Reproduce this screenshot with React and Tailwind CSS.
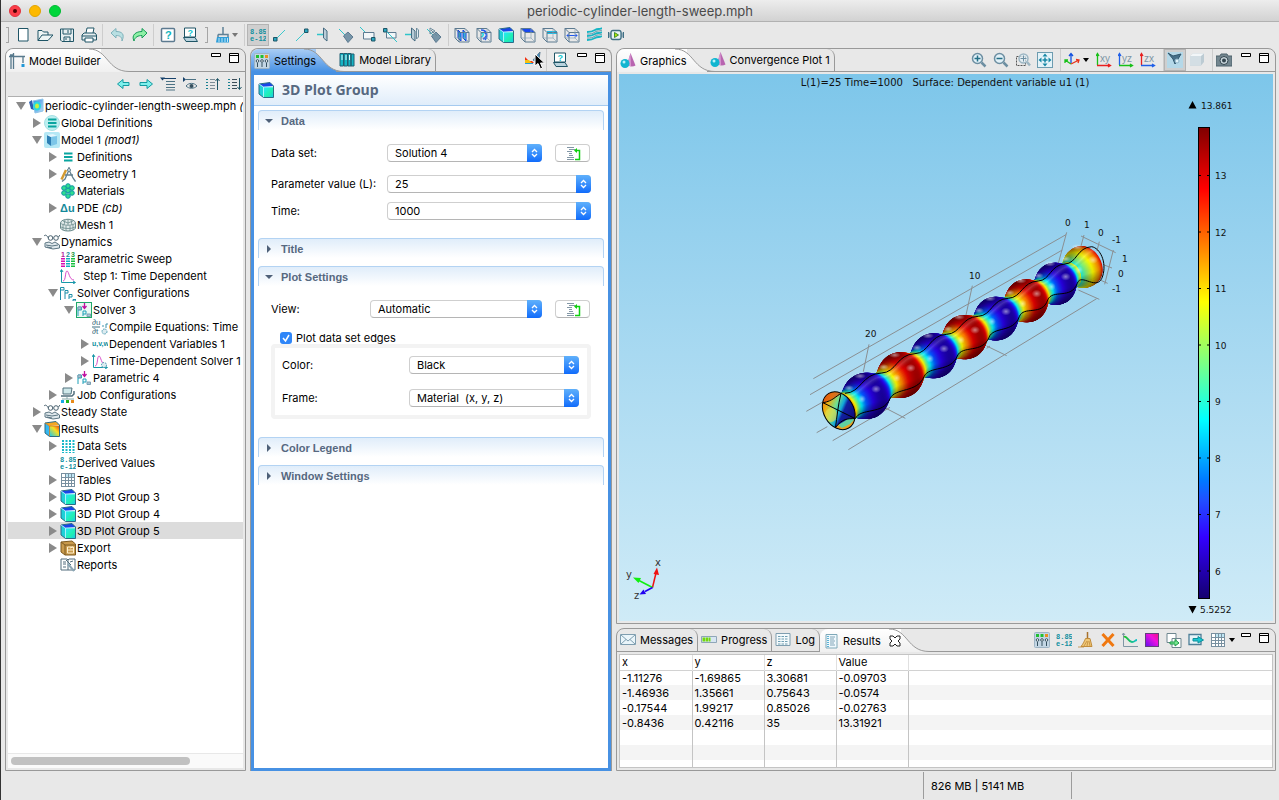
import { useState } from 'react';

const DARK = '#1f5566';
const STEEL = '#5f8196';

const Svg = ({ w = 16, h = 16, children }) => (
  <svg width={w} height={h} viewBox={`0 0 ${w} ${h}`} fill="none" className="shrink-0" aria-hidden="true">
    {children}
  </svg>
);

const NumIcon = () => (
  <Svg>
    <g fill="#0f8fa0" fontFamily="Liberation Mono, monospace" fontWeight="bold" fontSize="7">
      <text x="0" y="7">8.85</text>
      <text x="0" y="14">e-12</text>
    </g>
  </Svg>
);

const Cube = ({ hot }) => (
  <Svg>
    <path d="M1 2L5.500 5V15.500L1 12Z" fill={hot ? '#35b8f0' : '#1fd0d8'} />
    <path d="M1 2L12 .5L15.500 4L5.500 5Z" fill={hot ? '#f5a623' : '#1845e8'} />
    <path d="M5.500 5H15.500V15.500H5.500Z" fill={hot ? 'url(#hotFace)' : 'url(#coolFace)'} />
    <path d="M1 2L12 .5L15.500 4V15.500H5.500L1 12Z" stroke="#2b6c86" strokeWidth="1" />
    <path d="M1 2L5.500 5V15M5.500 5H15" stroke={hot ? '#c87820' : '#bff6ff'} strokeWidth=".8" />
  </Svg>
);

const WireCube = ({ children }) => (
  <Svg>
    {children}
    <path d="M1 1.5H11L15 5.5V15H5L1 11ZM1 1.5L5 5.5H15M5 5.5V15" stroke="#5c7a90" />
    <path d="M11 1.5V11H1M11 11L15 15" stroke="#8aa4b4" strokeWidth=".7" />
  </Svg>
);

const FileIcon = () => <Svg><path d="M3.5 1.5H13V14H3.5Z" fill="#fff" stroke={DARK} /></Svg>;
const OpenIcon = () => <Svg><path d="M1 13.500V3.500H5L6.500 5H11V8M1 13.500L5 8H16L11 13.500Z" stroke={DARK} fill="#eef5f5" /></Svg>;
const SaveIcon = () => (
  <Svg><path d="M1.500 2H14.500V14.500H3L1.500 13Z" stroke={DARK} fill="#e6eef0" /><path d="M4 2V7H12V2M5 14V10H11V14M9 3V6M7 11V13" stroke={DARK} /></Svg>
);
const PrintIcon = () => (
  <Svg><path d="M5 6L6 1H13L12 6" stroke={DARK} fill="#fff" /><path d="M1 8L3 6H14L15.500 8V13H1Z" stroke={DARK} fill="#e6eef0" /><path d="M1 9H15M4 11H12V15H4Z" stroke={DARK} fill="#fff" /></Svg>
);
const UndoIcon = () => <Svg><path d="M1 6L6 1.500V4.500C12 4.500 15 7 12 14C12 10 10 8.500 6 8.500V11Z" fill="#b8dfe2" stroke="#7fb2bb" /></Svg>;
const RedoIcon = () => <Svg><path d="M15 6L10 1.500V4.500C4 4.500 -1 8 2 14C3 10 6 8.500 10 8.500V11Z" fill="#8ff0a6" stroke="#149a55" /></Svg>;
const HelpIcon = () => (
  <Svg><rect x="1.500" y="1.500" width="13" height="13" rx="1" fill="#fff" stroke="#5c7a90" strokeWidth="1.500" /><text x="5" y="12" fontSize="11" fontWeight="bold" fill="#0fb5bd" fontFamily="Liberation Sans">?</text></Svg>
);
const BookIcon = () => (
  <Svg><path d="M2.500 1H13.500V10H2.500Z" fill="#fff" stroke={DARK} /><path d="M1.500 10.500H13L15.500 14.500H4Z" fill="#b9d3de" stroke={DARK} /><text x="5.500" y="9" fontSize="9" fontWeight="bold" fill="#0fc5cd" fontFamily="Liberation Sans">?</text></Svg>
);
const BrushIcon = () => (
  <Svg><path d="M8 0V7M3 7.500H13V10M3 7.500V10" stroke={STEEL} strokeWidth="1.500" /><path d="M2 10H14V15.500H1Z" fill="#2f9ed8" /><path d="M4 11V15M7 11V15M10 11V15M12.500 11V15" stroke="#bfe6fa" /></Svg>
);
const LineLow = () => <Svg><path d="M3 13L13 3" stroke="#3cc8cc" /><path d="M1.500 10.500H5V14H1.500Z" fill="#2aa7c0" stroke={DARK} /></Svg>;
const LineHigh = () => <Svg><path d="M2 14L12 4" stroke="#3cc8cc" /><path d="M10.500 2H14V5.500H10.500Z" fill="#2aa7c0" stroke={DARK} /></Svg>;
const PlaneV = ({ twice }) => (
  <Svg><path d="M1 7.500H8" stroke="#2fc4ca" strokeWidth="1.500" /><path d="M7.500 1L11 4V14L7.500 11Z" fill="#b9cdd8" stroke="#456a80" />{twice && <path d="M12.500 1V12L14.500 10V3Z" fill="#dfeaf0" stroke="#6c8b9c" />}</Svg>
);
const PlaneD = ({ twice }) => (
  <Svg><path d="M1 2L8 9" stroke="#2fc4ca" /><path d="M5.500 9L10 5L15 10L10 15.500Z" fill="#7795a8" stroke="#5c7a90" />{twice && <path d="M4 1V7L9 4ZM5 3L11 9" stroke="#6c8b9c" />}</Svg>
);
const BoxA = () => <Svg><path d="M0 0L6 6" stroke="#2fc4ca" /><path d="M3.500 5.500H14V12H3.500Z" fill="#f2f6f8" stroke="#5c7a90" /><path d="M11.500 10.500H15V14H11.500Z" fill="#2aa7c0" stroke={DARK} /></Svg>;
const BoxB = () => <Svg><path d="M4.500 5.500H14V11H4.500Z" fill="#f2f6f8" stroke="#5c7a90" /><path d="M3 3L15 15" stroke="#2fc4ca" /><path d="M1.500 1.500H5V5H1.500Z" fill="#2aa7c0" stroke={DARK} /></Svg>;
const Waves = () => (
  <Svg><path d="M1 5C5 5 6 5 9 3S13 3 16 1M1 9C5 9 6 9 9 7S13 7 16 5M1 13C5 13 6 13 9 11S13 11 16 9" stroke="#16b5c4" strokeWidth="1.800" /><path d="M1 7C5 7 6 7 9 5S13 5 16 3M1 11C5 11 6 11 9 9S13 9 16 7" stroke="#3d8299" strokeWidth=".8" /></Svg>
);
const PlayBox = () => (
  <Svg><rect x="3" y="3.500" width="10" height="9" rx="2" fill="#e9f2f4" stroke="#3f6f85" strokeWidth="1.300" /><path d="M.5 5V11M2 5.500V10.500M14 5.500V10.500M15.500 5V11" stroke="#3f6f85" /><path d="M6.500 5.500L10.500 8L6.500 10.500Z" fill="#b4e600" stroke="#3f8f30" /></Svg>
);

// tree and view icons
const Lines = ({ round }) => (
  <Svg>
    {round && <circle cx="8" cy="8" r="7.500" fill="#bdeff0" stroke="#a5dfe4" />}
    <path d="M4 4.500H12.500M4 8H12.500M4 11.500H12.500" stroke="#0aa5a0" strokeWidth="1.800" />
  </Svg>
);
const RootIcon = () => (
  <Svg><path d="M1 4L4 2L6 12L3 11Z" fill="#2c5fb0" /><path d="M5 3L15 1V13L7 15Z" fill="url(#sky)" stroke="#8dc3e8" /><ellipse cx="9" cy="8" rx="4" ry="4.500" fill="#29d8e0" /><ellipse cx="9" cy="8" rx="2" ry="2.500" fill="#c8f040" /></Svg>
);
const ModelIcon = () => (
  <Svg><rect width="16" height="16" rx="2" fill="#b5e8f5" /><path d="M3 3L7 5V14L3 11Z" fill="#2d7fb5" /><path d="M3 3L9 2L13 4L7 5Z" fill="#e5f6fd" /><path d="M7 5L13 4V12L7 14Z" fill="#7cc6e8" /></Svg>
);
const GeometryIcon = () => (
  <Svg><path d="M6 4L1.500 13.500" stroke="#d39a30" strokeWidth="2.500" /><path d="M9 1V4M9 4L5 13L2 15.500M9 4L13 12L15.500 15.500M5 9H13" stroke="#64808f" strokeWidth="1.300" /><circle cx="9" cy="4" r="1.500" fill="#dce6ea" stroke="#64808f" /></Svg>
);
const MaterialsIcon = () => (
  <Svg>
    {[[8, 3], [4, 5], [12, 5], [8, 7.5], [4, 10], [12, 10], [8, 13]].map(([x, y]) => (
      <circle key={`${x}-${y}`} cx={x} cy={y} r="2.300" fill="#2fdf90" stroke="#0f95a5" />
    ))}
  </Svg>
);
const PdeIcon = () => <Svg><text x="0" y="12" fontSize="11" fontWeight="bold" fill="#14899a" fontFamily="Liberation Sans">Δu</text></Svg>;
const MeshIcon = () => (
  <Svg><path d="M.5 6C1 1 15 1 15.500 6V11C14 15 2 15 .5 11Z" fill="#e2ebeb" stroke="#6a8a8c" /><path d="M.5 6C3 9 13 9 15.500 6M3 7.500V13M6 8.500V14M10 8.500V14M13 7.500V13M1 10C4 12 12 12 15 10M3 4L8 6L13 4M8 2V8M5 3L4 8M11 3L12 8" stroke="#6a8a8c" strokeWidth=".8" /></Svg>
);
const StudyIcon = () => (
  <Svg><circle cx="6.500" cy="4" r="2.300" stroke="#48606e" /><circle cx="12" cy="4" r="2.300" stroke="#48606e" /><path d="M0 2C2 0 3 2 4.500 4M14.500 3L16 1" stroke="#48606e" /><path d="M1 9L5 8L8 9.500L11 8L15.500 11V14L9 15L1 13Z" fill="#dfe8ec" stroke="#5c7683" /><path d="M2 11L8 12L14 11M3 13L8 14" stroke="#5c7683" /></Svg>
);
const SweepIcon = () => (
  <Svg>
    <g fontSize="7" fontWeight="bold" fontFamily="Liberation Sans"><text x="1" y="6" fill="#b5189a">1</text><text x="6" y="6" fill="#178e9c">2</text><text x="11" y="6" fill="#189a40">3</text></g>
    <path d="M3 7V16" stroke="#d810b0" strokeWidth="4" strokeDasharray="1.500 1" /><path d="M8 7V16" stroke="#12b0c0" strokeWidth="4" strokeDasharray="1.500 1" /><path d="M13 7V16" stroke="#18c040" strokeWidth="4" strokeDasharray="1.500 1" />
  </Svg>
);
const StepIcon = ({ gear }) => (
  <Svg><path d="M1.500 2V14.500H15M0 4L1.500 1.500L3 4M13 13L15.500 14.500L13 16" stroke="#1897a8" /><path d="M3 13C6 13 5 3 7 3S9 12 14 12" stroke="#d84fc8" />{gear && <circle cx="12" cy="12" r="2.500" fill="#dcebf0" stroke="#3c93ac" strokeDasharray="1.500 1" />}</Svg>
);
const ConfIcon = () => (
  <Svg><path d="M.5 15V2.500H4V5H.5M5 14V5.500H8V8H5M9 14V9.500H12V12H9M13 14.500H16V16H13Z" stroke="#1d8fa8" /></Svg>
);
const SolverIcon = ({ boxed }) => (
  <Svg>{boxed && <rect x=".5" y=".5" width="15" height="15" fill="#eaf8f4" stroke="#20a86a" />}<path d="M8.500 1V6M6.500 4L8.500 6.500L10.500 4" stroke="#c010a0" strokeWidth="1.300" /><path d="M2 14V5H5.500V8H2M7 14V9H10V12H7" stroke="#1d9fb8" /><path d="M2 5H5V7.500H2ZM11 12H14.500V14.500H11Z" fill="#a9c6d6" stroke="#7c9fb2" /></Svg>
);
const CompileIcon = () => (
  <Svg><g fontSize="8" fill="#3c6f80" fontFamily="Liberation Sans"><text x="0" y="6">∂u</text><text x="0" y="15">∂t</text></g><path d="M0 8H8" stroke="#3c6f80" /><path d="M10 7H12M14 5H16M14 5V9" stroke="#3c93ac" /><circle cx="12.500" cy="12.500" r="2.500" fill="#dcebf0" stroke="#3c93ac" strokeDasharray="1.500 1" /></Svg>
);
const UvwIcon = () => <Svg><text x="0" y="10" fontSize="7" fontWeight="bold" fill="#0f8fa0" fontFamily="Liberation Sans">u,v,w</text></Svg>;
const JobIcon = () => (
  <Svg><path d="M3 1H12L11 7H3Z" fill="#cfe8ea" stroke="#51707d" /><path d="M1 9H12L14 7V4" stroke="#51707d" strokeWidth="1.500" /><path d="M7 10V12M2 12H14" stroke="#8aa" /><path d="M1 13H4V16H1Z" fill="#18a8e8" /><path d="M6 13H9V16H6Z" fill="#20b820" /><path d="M11 13H14V16H11Z" fill="#e88a18" /></Svg>
);
const DataSetsIcon = () => (
  <Svg><path d="M3 2V15M6.500 2V15M10 2V15M13.500 2V15" stroke="#18b8c8" strokeWidth="2" strokeDasharray="2 1" /></Svg>
);
const GridIcon = () => (
  <Svg><rect x="1.500" y="1.500" width="13" height="13" fill="#fff" stroke="#7890a0" /><path d="M5 2H14V5H5Z" fill="#bfe6f4" /><path d="M2 5.500H14M2 8.500H14M2 11.500H14M5.500 2V14M8.500 2V14M11.500 2V14" stroke="#7890a0" /></Svg>
);
const ExportIcon = () => (
  <Svg><path d="M1 2L12 1L15.500 4V15H5L1 12Z" fill="#c99a4c" stroke="#7d5a20" /><path d="M5 5H15M5 5V15M1 2L5 5" stroke="#7d5a20" /><path d="M7.500 7H13.500V13H7.500ZM8 10H13M10 8L13 7" stroke="#fff0cc" /></Svg>
);
const ReportIcon = () => (
  <Svg><path d="M1 2H7L8 3L9 2H15V13H1Z" fill="#fff" stroke="#526d7c" /><path d="M8 3V13M3 5H6M3 7H6M3 10H6M10 5L13 4M11 8L6 3" stroke="#526d7c" /><path d="M8 7L14 14" stroke="#8aa6b5" strokeWidth="2" /></Svg>
);

const ConeIcon = () => (
  <Svg><path d="M10.500 0L15.500 12.500C13 14 9 13.500 7 12Z" fill="#b865b0" /><path d="M10.500 0L11 13.500L7 12Z" fill="#d89ad2" /><circle cx="5" cy="10.500" r="4.500" fill="#12b5d0" /><circle cx="4" cy="9" r="1.500" fill="#b8f2fa" /></Svg>
);
const CraneIcon = () => <Svg><path d="M0 3.500H16M4.500 0V16M2 16V4M14 4V10M1 2H5" stroke="#57798c" strokeWidth="1.300" /><path d="M12.500 11H15.500V14H12.500Z" fill="#2098d8" /></Svg>;
const SettingsIcon = () => (
  <Svg><rect x=".5" y=".5" width="15" height="15" rx="1" fill="#c3d6e4" stroke="#9eb4c4" /><path d="M2 2H5V5H2ZM6.500 2H9.500V5H6.500Z" fill="#20c030" /><path d="M11 2H14V5H11Z" fill="#e89020" /><g stroke="#35505f" fill="#fff"><circle cx="3.500" cy="8" r="1.300" /><circle cx="8" cy="8" r="1.300" /><circle cx="12.500" cy="8" r="1.300" /><path d="M3.500 10V14M8 10V14M12.500 10V14" /></g></Svg>
);
const LibraryIcon = () => (
  <Svg><path d="M1 1.500H4.500V14H1ZM5 1.500H8.500V14H5ZM9 1.500H12V14H9ZM12 2H15V14H12Z" fill="#15b5c5" stroke="#205f72" /><path d="M3 3V8M7 3V8M10.500 3V8" stroke="#d8fbfc" /></Svg>
);
const MailIcon = () => <Svg><path d="M.5 2.500H15.500V12.500H.5Z" fill="#eaf5fa" stroke="#7f9eb0" /><path d="M1 3L8 9L15 3M1 12L6 7.500M15 12L10 7.500" stroke="#7f9eb0" /></Svg>;
const ProgressIcon = () => <Svg><path d="M.5 4.500H15.500V10.500H.5Z" fill="#d7e6f2" stroke="#8fa6b8" /><path d="M1.500 7.500H9.500" stroke="#74d80c" strokeWidth="4" strokeDasharray="2.500 .5" /></Svg>;
const LogIcon = () => <Svg><path d="M1 1.500H15V13.500H1Z" fill="#f4fafc" stroke="#7f9eb0" /><path d="M3 4.500H13M3 7H13M3 9.500H13M3 12H13" stroke="#4d86a0" strokeDasharray="2.500 1" strokeWidth=".8" /></Svg>;
const ResultsIcon = () => <Svg><path d="M3 1.500H14V15H3Z" fill="#f0f9fd" stroke="#7fa8b8" /><path d="M5 3V14" stroke="#2a9ac8" strokeDasharray="1 1" strokeWidth="1.500" /><path d="M7 4H12M7 6H11M7 8H12M7 10H11M7 12H12" stroke="#6690a4" strokeWidth=".8" /></Svg>;

const Lens = ({ plus }) => (
  <Svg>
    <circle cx="6.500" cy="6.500" r="5" fill="#e2f1f8" stroke="#6d8fa2" strokeWidth="1.500" />
    <path d="M10.500 10.500L14.500 14.500" stroke="#6d8fa2" strokeWidth="2.500" />
    <path d={plus ? 'M3.500 6.500H9.500M6.500 3.500V9.500' : 'M3.500 6.500H9.500'} stroke="#236f86" strokeWidth="1.500" />
  </Svg>
);
const ZoomBox = () => <Svg><rect x="1.500" y="4.500" width="9" height="9" stroke="#555" strokeDasharray="2 1" /><circle cx="8.500" cy="6.500" r="4.500" fill="#e2f1f8" fillOpacity=".7" stroke="#9db6c3" strokeWidth="1.500" /><path d="M12 10L15 13.500" stroke="#9db6c3" strokeWidth="2.500" /><path d="M5.500 6.500H11.500M8.500 3.500V9.500" stroke="#6d8fa2" /></Svg>;
const Extents = () => <Svg><rect x=".5" y=".5" width="15" height="15" fill="#e4f3f9" stroke="#6d9cb0" /><path d="M8 1.500L10.500 4.500H5.500ZM8 14.500L10.500 11.500H5.500ZM1.500 8L4.500 5.500V10.500ZM14.500 8L11.500 5.500V10.500Z" fill="#1787a5" /><path d="M5.500 8H10.500M8 5.500V10.500" stroke="#1787a5" strokeWidth="1.500" /></Svg>;
const AxesIcon = () => (
  <Svg><path d="M7 11V2M5 4L7 1.500L9 4" stroke="#1050e0" strokeWidth="1.300" /><path d="M7 12L1 8M1 11V8H4" stroke="#18c018" strokeWidth="1.300" /><path d="M7 12L15 8M12 7.500L15 8L14 11" stroke="#e83018" strokeWidth="1.300" /></Svg>
);
const PlaneAxes = ({ up, right, label }) => (
  <Svg><path d="M1.500 13V2M0 4L1.500 1.500L3 4" stroke={up} strokeWidth="1.300" /><path d="M1 13.500H14M12 12L14.500 13.500L12 15" stroke={right} strokeWidth="1.300" /><text x="4" y="10" fontSize="10" fill="#7d95a5" fontFamily="Liberation Sans">{label}</text></Svg>
);
const SpotIcon = () => (
  <Svg><rect width="16" height="16" fill="#b5d8e8" /><path d="M1 1L6 4L14 2L8 12L6 7Z" fill="#46708a" stroke="#2f566d" /><circle cx="10" cy="9" r="2" fill="#dff2fa" stroke="#8db3c7" /></Svg>
);
const GhostCube = () => <Svg><path d="M1 4L4 1.500H15V10L12 13.500H1Z" fill="#bccbd3" /><path d="M1 4H12V13.500H1Z" fill="#d3dee4" /><path d="M1 4L4 1.500H15L12 4Z" fill="#f2f6f8" /></Svg>;
const Camera = () => <Svg><path d="M0 4H4L5 2H11L12 4H16V14H0Z" fill="#73868f" stroke="#4f626c" /><circle cx="8" cy="8.500" r="4" fill="#c9d6dc" stroke="#34454e" /><circle cx="8" cy="8.500" r="2" fill="#34454e" /></Svg>;
const Broom = () => <Svg><path d="M9.500 0V7" stroke="#a8722c" strokeWidth="1.500" /><path d="M7.500 6.500H12L14 14.500H3C5 12 6 10 7.500 6.500Z" fill="#f0c777" stroke="#c08c3c" /><path d="M6 14L9 9M9 14L10 9M12 14L11 9M0 15H6" stroke="#c08c3c" strokeWidth=".8" /></Svg>;
const CrossIcon = () => <Svg><path d="M2.500 2L13.500 14M13.500 2L2.500 14" stroke="#f07810" strokeWidth="3" /></Svg>;
const PlotIcon = () => <Svg><path d="M1.500 1V14.500H16M0 3L1.500 1L3 3" stroke="#7f97a5" /><path d="M2 5C5 3 6 10 10 10C13 10 13 8 15 8" stroke="url(#wave)" strokeWidth="1.800" /></Svg>;
const SurfIcon = () => <Svg><rect x="1.500" y="1.500" width="13" height="13" fill="url(#magenta)" stroke="#62407c" /></Svg>;
const CopyIcon = () => <Svg><path d="M1 1.500H10V10.500H1ZM6 6.500H15V15.500H6Z" fill="#fff" stroke="#6f8790" /><path d="M4 10H9V7.500L13 11L9 14V12H4Z" fill="#78e890" stroke="#1c9a48" /></Svg>;
const WindowIcon = () => <Svg><path d="M1 2.500H13V12.500H1Z" fill="#e7f4f9" stroke="#4d7f98" strokeWidth="1.300" /><path d="M5 6.500H10V4.500L15.500 8L10 11V9H5Z" fill="#18c8d0" stroke="#0f8f9c" /></Svg>;
const PlotBrush = () => <Svg><path d="M0 5L4 9H7L9 11H0Z" fill="#f03010" /><path d="M0 8H4L7 11H0Z" fill="#f8c010" /><path d="M0 11H8V12H0Z" fill="#20a0e0" /><path d="M8 8L15 0L14 8L10 9Z" fill="#3b8fc4" stroke="#5c7a90" /></Svg>;
const ListUp = () => <Svg><path d="M6 3.500H11M6 6.500H11M6 9.500H11M6 12.500H11" stroke="#7d8c96" /><path d="M2 3.500H4M2 6.500H4M2 9.500H4M2 12.500H4" stroke="#1a7f90" /><path d="M13.500 14V3M11.500 5L13.500 2.500L15.500 5" stroke={DARK} /></Svg>;
const ListDown = () => <Svg><path d="M6 3.500H11M6 6.500H11M6 9.500H11M6 12.500H11" stroke="#3c4d58" /><path d="M2 3.500H4M2 6.500H4M2 9.500H4M2 12.500H4" stroke="#1a7f90" /><path d="M13.500 2V13M11.500 11L13.500 13.500L15.500 11" stroke={DARK} /></Svg>;
const ListFold = () => <Svg><path d="M0 1.500H5L2.500 4.500Z" fill="#16406a" /><path d="M4 2.500H16" stroke="#16406a" /><path d="M6 5.500H15M6 8.500H15M6 11.500H15M6 14H15" stroke="#4c7284" /></Svg>;
const EyeIcon = () => <Svg><path d="M1 1V6L4 3.500Z" fill="#16406a" /><path d="M4 3.500H14" stroke="#4c7284" /><path d="M4 10C7 6.500 12 6.500 15 10C12 13 7 13 4 10Z" stroke="#4c7284" /><circle cx="9.500" cy="10" r="2" fill="#35505f" /></Svg>;
const ArrowIcon = ({ right }) => (
  <Svg>{right
    ? <path d="M14.500 8L9 3.500V6.500H2V9.500H9V12.500Z" fill="#7ff0ec" stroke="#129aa0" />
    : <path d="M1.500 8L7 3.500V6.500H13V9.500H7V12.500Z" fill="#7ff0ec" stroke="#129aa0" />}
  </Svg>
);
const GoToIcon = () => (
  <Svg><path d="M2 2.500H9M4 4.500H10M2 6.500H7M4 8.500H7M4 10.500H8M2 12.500H9M2 14.500H9" stroke="#8397a6" /><path d="M10 5.500H14.500V14.500H10" stroke="#10d010" strokeWidth="1.500" /><path d="M12 3L9 5.500L12 8Z" fill="#10d010" /></Svg>
);

const tree = [
  { level: 0, label: 'periodic-cylinder-length-sweep.mph', note: '(root)', icon: <RootIcon />, open: true },
  { level: 1, label: 'Global Definitions', icon: <Lines round />, open: false },
  { level: 1, label: 'Model 1', note: '(mod1)', icon: <ModelIcon />, open: true },
  { level: 2, label: 'Definitions', icon: <Lines />, open: false },
  { level: 2, label: 'Geometry 1', icon: <GeometryIcon />, open: false },
  { level: 2, label: 'Materials', icon: <MaterialsIcon /> },
  { level: 2, label: 'PDE', note: '(cb)', icon: <PdeIcon />, open: false },
  { level: 2, label: 'Mesh 1', icon: <MeshIcon /> },
  { level: 1, label: 'Dynamics', icon: <StudyIcon />, open: true },
  { level: 2, label: 'Parametric Sweep', icon: <SweepIcon /> },
  { level: 2, label: '\u00a0\u00a0Step 1: Time Dependent', icon: <StepIcon /> },
  { level: 2, label: 'Solver Configurations', icon: <ConfIcon />, open: true },
  { level: 3, label: 'Solver 3', icon: <SolverIcon boxed />, open: true },
  { level: 4, label: 'Compile Equations: Time', icon: <CompileIcon /> },
  { level: 4, label: 'Dependent Variables 1', icon: <UvwIcon />, open: false },
  { level: 4, label: 'Time-Dependent Solver 1', icon: <StepIcon gear />, open: false },
  { level: 3, label: 'Parametric 4', icon: <SolverIcon />, open: false },
  { level: 2, label: 'Job Configurations', icon: <JobIcon />, open: false },
  { level: 1, label: 'Steady State', icon: <StudyIcon />, open: false },
  { level: 1, label: 'Results', icon: <Cube hot />, open: true },
  { level: 2, label: 'Data Sets', icon: <DataSetsIcon />, open: false },
  { level: 2, label: 'Derived Values', icon: <NumIcon /> },
  { level: 2, label: 'Tables', icon: <GridIcon />, open: false },
  { level: 2, label: '3D Plot Group 3', icon: <Cube />, open: false },
  { level: 2, label: '3D Plot Group 4', icon: <Cube />, open: false },
  { level: 2, label: '3D Plot Group 5', icon: <Cube />, open: false },
  { level: 2, label: 'Export', icon: <ExportIcon />, open: false },
  { level: 2, label: 'Reports', icon: <ReportIcon /> },
];

const rows = [
  ['-1.11276', '-1.69865', '3.30681', '-0.09703'],
  ['-1.46936', '1.35661', '0.75643', '-0.0574'],
  ['-0.17544', '1.99217', '0.85026', '-0.02763'],
  ['-0.8436', '0.42116', '35', '13.31921'],
  ['', '', '', ''],
  ['', '', '', ''],
  ['', '', '', ''],
];

const IconButton = ({ label, pressed, children }) => (
  <button
    aria-label={label}
    className={`w-[22px] h-[22px] shrink-0 flex items-center justify-center ${pressed ? 'bg-[#cfcfcf] border border-[#b4b4b4]' : ''}`}
  >
    {children}
  </button>
);

const Sep = () => <span className="w-px h-[22px] bg-[#cdcdcd] shrink-0" />;
const Handle = () => <span className="w-[3px] h-4 border border-l-0 border-[#a5a5a5] shrink-0" />;
const Caret = ({ color }) => (
  <svg width="6" height="4" className="shrink-0" aria-hidden="true"><path d="M0 0H6L3 4Z" fill={color} /></svg>
);

const WindowButtons = () => (
  <div className="flex items-start gap-2 pt-1 pl-1.5 pr-1.5 self-start shrink-0">
    <button aria-label="Minimize">
      <svg width="10" height="10" className="block"><path d="M.5 .5H9.500V3.500H.5Z" fill="#fff" stroke="#000" /></svg>
    </button>
    <button aria-label="Maximize">
      <svg width="10" height="10" className="block"><path d="M.5 .5H9.500V9.500H.5ZM0 2.500H10" fill="#fff" stroke="#000" /></svg>
    </button>
  </div>
);

// slanted right edge of the selected tab
const TabCurve = ({ fill }) => (
  <svg width="40" height="23" className="shrink-0 -ml-3" aria-hidden="true">
    <path d="M0 0C19 0 18 22.500 40 22.500V23H0Z" fill={fill} />
    <path d="M0 0C19 0 18 22.500 40 22.500" fill="none" stroke="#999" />
  </svg>
);

const ActiveTab = ({ icon, label, blue, close }) => (
  <div className="flex shrink-0 h-[23px]">
    <div className={`flex items-center gap-1 pl-[3px] rounded-tl-lg ${blue ? 'bg-linear-to-b from-[#a9cdf5] to-[#4791e3]' : 'bg-linear-to-b from-white to-[#f0f0f0]'}`}>
      {icon}
      <span className="relative z-10 whitespace-nowrap">{label}</span>
      {close && (
        <button aria-label="Close" className="relative z-10 ml-1">
          <svg width="12" height="12" className="block"><path d="M1 1H4L6 3L8 1H11V4L9 6L11 8V11H8L6 9L4 11H1V8L3 6L1 4Z" fill="#fff" stroke="#222" /></svg>
        </button>
      )}
    </div>
    <TabCurve fill={blue ? 'url(#tabBlue)' : 'url(#tabWhite)'} />
  </div>
);

const IdleTab = ({ icon, label }) => (
  <div className="flex items-center gap-1 h-[23px] pl-[3px] pr-1 shrink-0 border-r border-b border-[#999] rounded-tr-lg">
    {icon}
    <span className="whitespace-nowrap">{label}</span>
  </div>
);

const Select = ({ id, value, className }) => (
  <div className={`relative h-[18px] ${className}`}>
    <select
      id={id}
      defaultValue={value}
      className="appearance-none w-full h-[18px] pl-[7px] pr-5 bg-white border border-[#cfcfcf] border-b-[#b5b5b5] rounded text-[11px] leading-4"
    >
      <option>{value}</option>
    </select>
    <span className="absolute right-0 top-0 w-[15px] h-[18px] rounded-r bg-linear-to-b from-[#5fb0fb] to-[#0f6bfb] flex items-center justify-center pointer-events-none">
      <svg width="7" height="10" fill="none" stroke="#fff" strokeWidth="1.300"><path d="M1 4L3.500 1.500L6 4M1 6L3.500 8.500L6 6" /></svg>
    </span>
  </div>
);

const Section = ({ title, open, children }) => (
  <section className="mb-2">
    <button className="w-full h-5 flex items-center gap-2 pl-[6px] border border-b-0 border-[#b3d3f3] rounded-t bg-linear-to-b from-[#e0edfa] to-white text-[#566880] font-bold font-['Liberation_Sans',sans-serif]">
      <svg width="8" height="8" fill="#4e6078" aria-hidden="true">
        {open ? <path d="M0 2H8L4 6Z" /> : <path d="M2 0L6 4L2 8Z" />}
      </svg>
      {title}
    </button>
    {children}
  </section>
);

const GoToButton = ({ label }) => (
  <button aria-label={label} className="ml-[13px] w-[35px] h-[18px] flex items-center justify-center bg-white border border-[#cfcfcf] border-b-[#b5b5b5] rounded">
    <GoToIcon />
  </button>
);

// bulge centres on the screen, near end first
const centres = [
  [838.7, 410.7, -0.77], [866, 396, 0], [900.7, 375, 1], [934, 355.7, 2], [965, 337, 3],
  [996, 318.5, 4], [1026.7, 300.7, 5], [1055.7, 283.7, 6], [1083, 267, 7], [1086, 265, 7.1],
];

const jetStops = [
  [0, [14, 0, 110]], [0.13, [40, 0, 225]], [0.25, [0, 90, 255]], [0.375, [0, 240, 250]],
  [0.5, [120, 240, 130]], [0.63, [250, 250, 0]], [0.78, [250, 120, 0]], [0.88, [225, 0, 0]], [1, [105, 0, 0]],
];

const jet = (v) => {
  const i = Math.max(1, jetStops.findIndex(([p]) => v <= p));
  const [p0, c0] = jetStops[i - 1];
  const [p1, c1] = jetStops[i];
  const f = (v - p0) / (p1 - p0);
  return `rgb(${c0.map((c, k) => Math.round(c + (c1[k] - c) * f)).join(',')})`;
};

const slices = [];
for (let s = 7.1; s >= -0.77; s -= 0.02) {
  const i = Math.max(1, centres.findIndex(([, , p]) => s <= p));
  const [x0, y0, s0] = centres[i - 1];
  const [x1, y1, s1] = centres[i];
  const f = (s - s0) / (s1 - s0);
  const value = s > 6.55 ? 0.4 + (s - 6.55) * 0.86 : 0.5 - 0.44 * Math.cos(Math.PI * (s + 0.04));
  slices.push({
    x: x0 + (x1 - x0) * f,
    y: y0 + (y1 - y0) * f,
    r: (23.3 - s * 0.32) * (0.81 + 0.19 * Math.cos(2 * Math.PI * s)),
    color: jet(value),
  });
}

const upperEdge = [[165, 580], [275, 519], [375, 461], [470, 403], [565, 349], [655, 295], [745, 243], [825, 192], [905, 140]];
const lowerEdge = [[196, 656], [300, 596], [402, 530], [502, 468], [597, 412], [688, 350], [773, 300], [862, 250], [938, 228]];

const toX = (x) => 790 + x / 3;
const toY = (y) => 200 + y / 3;
const pt = (x, y) => `${toX(x).toFixed(1)} ${toY(y).toFixed(1)}`;

const edgePath = (points, bend) =>
  points.slice(1).reduce((d, [x, y], i) => {
    const [px, py] = points[i];
    const w = x - px;
    return bend
      ? `${d}C${pt(px + w * 0.15, py - 34)} ${pt(x - w * 0.2, y + 50)} ${pt(x, y)}`
      : `${d}C${pt(px + w * 0.45, py - 2)} ${pt(px + w * 0.45, y + 2)} ${pt(x, y)}`;
  }, `M${pt(...points[0])}`);

const gridLines = [
  [70, 536, 828, 104], [60, 584, 817, 150], [49, 634, 100, 605], [80, 698, 112, 680], [128, 722, 300, 622],
  [590, 445, 600, 438], [175, 749, 920, 296], [830, 97, 805, 190], [547, 257, 528, 345], [237, 433, 220, 515],
  [590, 438, 650, 467], [288, 625, 346, 655], [865, 270, 928, 298], [873, 108, 977, 158], [882, 105, 873, 138],
  [928, 125, 921, 152], [970, 150, 944, 253], [940, 194, 966, 204], [926, 238, 953, 250],
];

const axisLabels = [
  [1065, 226, '0'], [1084, 228, '1'], [1098, 236, '0'], [1112, 243, '-1'], [1122, 262, '1'],
  [1118, 277, '0'], [1112, 292, '-1'], [969, 279, '10'], [865, 337, '20'],
];

const Plot = () => (
  <svg viewBox="619 74 654 547" className="w-full h-full block" role="img" aria-label="Surface plot">
    <defs>
      <linearGradient id="shade" x1="0" y1="0" x2="0" y2="1">
        <stop offset="0" stopColor="#000" stopOpacity=".45" />
        <stop offset=".15" stopColor="#000" stopOpacity=".1" />
        <stop offset=".28" stopColor="#fff" stopOpacity=".18" />
        <stop offset=".4" stopColor="#000" stopOpacity="0" />
        <stop offset=".75" stopColor="#000" stopOpacity=".08" />
        <stop offset="1" stopColor="#000" stopOpacity=".5" />
      </linearGradient>
      <radialGradient id="glow">
        <stop offset="0" stopColor="#fff" stopOpacity=".5" />
        <stop offset="1" stopColor="#fff" stopOpacity="0" />
      </radialGradient>
      <linearGradient id="bar" x1="0" y1="0" x2="0" y2="1">
        <stop offset="0" stopColor="#800000" />
        <stop offset=".13" stopColor="#ff0000" />
        <stop offset=".37" stopColor="#ffff00" />
        <stop offset=".62" stopColor="#00ffff" />
        <stop offset=".75" stopColor="#0078ff" />
        <stop offset=".79" stopColor="#2050ff" />
        <stop offset=".87" stopColor="#3300ff" />
        <stop offset="1" stopColor="#14006e" />
      </linearGradient>
      <linearGradient id="inside" x1="0" y1=".2" x2="1" y2=".7">
        <stop offset="0" stopColor="#e04010" />
        <stop offset=".25" stopColor="#f0b010" />
        <stop offset=".42" stopColor="#70e090" />
        <stop offset=".55" stopColor="#10a8d8" />
        <stop offset=".62" stopColor="#1020a0" />
        <stop offset="1" stopColor="#10006a" />
      </linearGradient>
      <clipPath id="mouth"><ellipse cx="838.700" cy="410.700" rx="15" ry="20" transform="rotate(-30 838.700 410.700)" /></clipPath>
    </defs>

    <g stroke="#8a8f92" strokeWidth="1">
      {gridLines.map(([x1, y1, x2, y2]) => (
        <line key={`${x1}-${y1}`} x1={toX(x1)} y1={toY(y1)} x2={toX(x2)} y2={toY(y2)} />
      ))}
    </g>

    {slices.map(({ x, y, r, color }, i) => (
      <g key={i} transform={`translate(${x} ${y}) rotate(-31)`}>
        <ellipse rx={r * 0.75} ry={r} fill={color} />
        <ellipse rx={r * 0.75} ry={r} fill="url(#shade)" />
      </g>
    ))}
    {centres.slice(1, 9).map(([x, y], i) => (
      <g key={i} fill="url(#glow)">
        <ellipse cx={x + 10} cy={y - 7} rx="5" ry="4" />
        <ellipse cx={x - 6} cy={y - 20} rx="6" ry="3" />
        <ellipse cx={x - 4} cy={y + 3} rx="4" ry="4" />
        <ellipse cx={x - 17} cy={y - 8} rx="5" ry="3" />
      </g>
    ))}

    <g clipPath="url(#mouth)">
      <rect x="818" y="386" width="42" height="48" fill="url(#inside)" />
      <path d="M830 434L838 425L848 421L856 419V434Z" fill="#e8a020" />
      <path d="M838 425L848 419L856 418L850 424L842 428Z" fill="#60d0a0" />
      <ellipse cx="831" cy="415" rx="6" ry="7" fill="#f8e040" opacity=".6" />
      <path d="M820 392H845L836 397L822 404Z" fill="#e05010" opacity=".7" />
    </g>
    <g fill="none" stroke="#000" strokeWidth="1">
      <ellipse cx="838.700" cy="410.700" rx="15" ry="20" transform="rotate(-30 838.700 410.700)" />
      <path d="M823 402.700L855 418.500M841 393.500C838 405 837 417 835.500 427.500M823 402.700C833 401 836 396 841 393.500M835.500 427.500C843 418 847 419 855 418.500" />
      <path d={edgePath(upperEdge, false)} />
      <path d={edgePath(lowerEdge, true)} />
      <path d="M1091.700 246.700C1100 248 1107 262 1102.700 276" />
    </g>

    <g fontFamily="'DejaVu Sans', sans-serif" fontSize="9" fill="#111">
      <text x="945" y="86" fontSize="10" textAnchor="middle">L(1)=25 Time=1000{'\u00a0\u00a0 '}Surface: Dependent variable u1 (1)</text>
      {axisLabels.map(([x, y, t]) => <text key={`${x}-${y}`} x={x} y={y}>{t}</text>)}
      <text x="1201" y="109">13.861</text>
      <text x="1200" y="613">5.5252</text>
      {[13, 12, 11, 10, 9, 8, 7, 6].map((n, i) => (
        <text key={n} x="1215" y={179 + i * 56.5}>{n}</text>
      ))}
    </g>
    <path d="M1192.500 101L1196.500 108.500H1188.500ZM1192.500 613.500L1196.500 606H1188.500Z" fill="#000" />
    <rect x="1198.500" y="127.500" width="11" height="471" fill="url(#bar)" stroke="#000" />
    {[0, 1, 2, 3, 4, 5, 6, 7].map((i) => (
      <path key={i} d={`M1198 ${175.5 + i * 56.5}h3m6 0h3`} stroke="#000" />
    ))}

    <g strokeWidth="1.500">
      <path d="M652.500 587.500L656 573" stroke="#f01010" /><path d="M657 567.500L659 575L653.500 574Z" fill="#f01010" />
      <path d="M652.500 587.500L639 580.500" stroke="#10f010" /><path d="M633 577.500L641 578L638.500 583Z" fill="#10f010" />
      <path d="M652.500 587.500L645 591.500" stroke="#2000f0" /><path d="M639.500 594.500L643.500 589.500L646 594Z" fill="#2000f0" />
    </g>
    <g fontFamily="'DejaVu Sans', sans-serif" fontSize="10" fill="#333">
      <text x="655" y="566">x</text>
      <text x="626" y="578">y</text>
      <text x="634" y="599">z</text>
    </g>
  </svg>
);

const SharedDefs = () => (
  <svg className="absolute w-0 h-0" aria-hidden="true">
    <defs>
      <linearGradient id="coolFace" x1="0" y1="0" x2="1" y2="1"><stop offset="0" stopColor="#25e6ff" /><stop offset=".6" stopColor="#20f0b0" /><stop offset="1" stopColor="#18c8f0" /></linearGradient>
      <linearGradient id="hotFace" x1="0" y1="1" x2="1" y2="0"><stop offset="0" stopColor="#10c8f8" /><stop offset=".6" stopColor="#f8e020" /><stop offset="1" stopColor="#f04010" /></linearGradient>
      <linearGradient id="sky" x1="0" y1="0" x2="1" y2="1"><stop offset="0" stopColor="#2f80e0" /><stop offset="1" stopColor="#b8e0f8" /></linearGradient>
      <linearGradient id="wave"><stop offset="0" stopColor="#20c020" /><stop offset="1" stopColor="#10c0d0" /></linearGradient>
      <linearGradient id="magenta" x1="0" y1="1" x2="1" y2="0"><stop offset="0" stopColor="#6010f0" /><stop offset=".6" stopColor="#f010e0" /><stop offset="1" stopColor="#f01080" /></linearGradient>
      <linearGradient id="tabWhite" x1="0" y1="0" x2="0" y2="1"><stop offset="0" stopColor="#fff" /><stop offset="1" stopColor="#f0f0f0" /></linearGradient>
      <linearGradient id="tabBlue" x1="0" y1="0" x2="0" y2="1"><stop offset="0" stopColor="#a9cdf5" /><stop offset="1" stopColor="#4791e3" /></linearGradient>
    </defs>
  </svg>
);

const ModelBuilder = () => {
  const [selected, setSelected] = useState('3D Plot Group 5');
  return (
    <div className="w-[241px] shrink-0 flex flex-col border border-[#999] rounded-t-lg">
      <div className="flex">
        <ActiveTab icon={<CraneIcon />} label="Model Builder" />
        <div className="flex-1 flex justify-end border-b border-[#999]"><WindowButtons /></div>
      </div>
      <div className="h-6 flex items-center justify-end">
        <IconButton label="Previous"><ArrowIcon /></IconButton>
        <IconButton label="Next"><ArrowIcon right /></IconButton>
        <IconButton label="Collapse"><ListFold /></IconButton>
        <IconButton label="Show"><EyeIcon /></IconButton>
        <IconButton label="Sort up"><ListUp /></IconButton>
        <IconButton label="Sort down"><ListDown /></IconButton>
      </div>
      <div className="flex-1 flex flex-col mx-0.5 mb-0.5 bg-white border-t border-[#b0b0b0]">
        <ul className="flex-1 overflow-hidden">
          {tree.map((n) => (
            <li key={n.label}>
              <button
                onClick={() => setSelected(n.label)}
                style={{ paddingLeft: 5 + n.level * 16 }}
                className={`w-full h-[17px] flex items-center whitespace-nowrap ${n.label === selected ? 'bg-[#dcdcdc]' : ''}`}
              >
                <span className="w-[15px] shrink-0 flex justify-center">
                  {n.open !== undefined && (
                    <svg width="10" height="10" fill="#8a8a8a" aria-hidden="true">
                      {n.open ? <path d="M0 1H10L5 9Z" /> : <path d="M1 0L9 5L1 10Z" />}
                    </svg>
                  )}
                </span>
                {n.icon}
                <span className="pl-px">{n.label}{n.note && <i> {n.note}</i>}</span>
              </button>
            </li>
          ))}
        </ul>
        <div className="h-[15px] border-t border-[#e8e8e8] bg-[#fafafa] px-[3px] flex items-center">
          <div className="w-[78%] h-2 rounded-full bg-[#c1c1c1]" />
        </div>
      </div>
    </div>
  );
};

const SettingsPanel = () => (
  <div className="w-[362px] shrink-0 flex flex-col border border-[#999] border-b-0 rounded-t-lg">
    <div className="flex">
      <ActiveTab icon={<SettingsIcon />} label="Settings" blue />
      <div className="-ml-2"><IdleTab icon={<LibraryIcon />} label="Model Library" /></div>
      <div className="flex-1 flex items-center justify-end border-b border-[#999]">
        <div className="relative mr-0.5">
          <IconButton label="Plot"><PlotBrush /></IconButton>
          <svg width="12" height="18" className="absolute left-3 top-1 z-20" aria-hidden="true">
            <path d="M1 1V13L4 10.500L6.500 16L8.500 15L6.500 10H10.500Z" fill="#000" stroke="#fff" />
          </svg>
        </div>
        <Sep />
        <div className="pl-0.5"><IconButton label="Help"><BookIcon /></IconButton></div>
        <WindowButtons />
      </div>
    </div>
    <div className="flex-1 border-3 border-[#4791e3] bg-white">
      <div className="h-[31px] flex items-center gap-2 pl-1 bg-linear-to-b from-white to-[#e0edfa] border-b border-[#a5caef]">
        <Cube />
        <h1 className="text-[14px] font-bold text-[#566880] font-['Open_Sans',sans-serif]">3D Plot Group</h1>
      </div>
      <div className="px-1 pt-1">
        <Section title="Data" open>
          <div className="pl-[13px] pt-3.5 pb-2.5">
            <div className="flex items-center">
              <label htmlFor="dataset" className="w-[116px]">Data set:</label>
              <Select id="dataset" value="Solution 4" className="w-[155px]" />
              <GoToButton label="Go to data set" />
            </div>
            <div className="flex items-center mt-[13px]">
              <label htmlFor="param" className="w-[116px]">Parameter value (L):</label>
              <Select id="param" value="25" className="w-[204px]" />
            </div>
            <div className="flex items-center mt-[9px]">
              <label htmlFor="time" className="w-[116px]">Time:</label>
              <Select id="time" value="1000" className="w-[204px]" />
            </div>
          </div>
        </Section>
        <Section title="Title" />
        <Section title="Plot Settings" open>
          <div className="px-[13px] pt-3.5 pb-2.5">
            <div className="flex items-center">
              <label htmlFor="view" className="w-[99px]">View:</label>
              <Select id="view" value="Automatic" className="w-[172px]" />
              <GoToButton label="Go to view" />
            </div>
            <label className="flex items-center gap-1 mt-3.5 pl-[9px] h-3">
              <span className="relative w-3 h-3">
                <input type="checkbox" defaultChecked className="block appearance-none w-3 h-3 rounded-[3px] bg-[#b9c8d8] checked:bg-[#2f86f8]" />
                <svg width="12" height="12" className="absolute inset-0 pointer-events-none" fill="none" stroke="#fff" strokeWidth="1.500"><path d="M3 6L5.500 9L9 3" /></svg>
              </span>
              Plot data set edges
            </label>
            <div className="border-4 border-[#f3f3f3] rounded pl-[7px] pr-2 py-2">
              <div className="flex items-center justify-between">
                <label htmlFor="color">Color:</label>
                <Select id="color" value="Black" className="w-[170px]" />
              </div>
              <div className="flex items-center justify-between mt-[15px]">
                <label htmlFor="frame">Frame:</label>
                <Select id="frame" value={'Material\u00a0 (x, y, z)'} className="w-[170px]" />
              </div>
            </div>
          </div>
        </Section>
        <Section title="Color Legend" />
        <Section title="Window Settings" />
      </div>
    </div>
  </div>
);

const Graphics = () => (
  <div className="flex-1 flex flex-col border border-[#999] rounded-t-lg">
    <div className="flex">
      <ActiveTab icon={<ConeIcon />} label="Graphics" />
      <div className="-ml-2"><IdleTab icon={<ConeIcon />} label="Convergence Plot 1" /></div>
      <div className="flex-1 flex items-center justify-end border-b border-[#999]">
        <IconButton label="Zoom in"><Lens plus /></IconButton>
        <IconButton label="Zoom out"><Lens /></IconButton>
        <IconButton label="Zoom box"><ZoomBox /></IconButton>
        <IconButton label="Zoom extents"><Extents /></IconButton>
        <div className="flex items-center pl-1">
          <Sep />
          <IconButton label="Default view"><AxesIcon /></IconButton>
          <Caret color="#000" />
        </div>
        <div className="flex px-1">
          <IconButton label="xy view"><PlaneAxes up="#18c018" right="#e82020" label="xy" /></IconButton>
          <IconButton label="yz view"><PlaneAxes up="#2060e8" right="#18c018" label="yz" /></IconButton>
          <IconButton label="zx view"><PlaneAxes up="#e82020" right="#2060e8" label="zx" /></IconButton>
        </div>
        <Sep />
        <IconButton label="Scene light" pressed><SpotIcon /></IconButton>
        <div className="pr-1"><IconButton label="Transparency"><GhostCube /></IconButton></div>
        <Sep />
        <IconButton label="Image snapshot"><Camera /></IconButton>
        <WindowButtons />
      </div>
    </div>
    <div className="flex-1 m-0.5 bg-linear-to-b from-[#7dc6ea] to-[#cfebf7]">
      <Plot />
    </div>
  </div>
);

const ResultsPanel = () => (
  <div className="h-[143px] shrink-0 flex flex-col border border-[#999] rounded-t-lg">
    <div className="flex">
      <IdleTab icon={<MailIcon />} label="Messages" />
      <IdleTab icon={<ProgressIcon />} label="Progress" />
      <IdleTab icon={<LogIcon />} label="Log" />
      <ActiveTab icon={<ResultsIcon />} label="Results" close />
      <div className="flex-1 flex items-center justify-end border-b border-[#999]">
        <IconButton label="Full precision"><SettingsIcon /></IconButton>
        <IconButton label="Number format"><NumIcon /></IconButton>
        <IconButton label="Clear table"><Broom /></IconButton>
        <IconButton label="Delete table"><CrossIcon /></IconButton>
        <IconButton label="Table graph"><PlotIcon /></IconButton>
        <IconButton label="Table surface"><SurfIcon /></IconButton>
        <IconButton label="Copy table"><CopyIcon /></IconButton>
        <IconButton label="Export table"><WindowIcon /></IconButton>
        <IconButton label="Display table"><GridIcon /></IconButton>
        <Caret color="#000" />
        <WindowButtons />
      </div>
    </div>
    <div className="flex-1 min-h-0 overflow-hidden m-0.5 bg-white border border-[#c4c4c4]">
      <table className="w-full table-fixed border-collapse">
        <thead>
          <tr className="h-[15px] border-b border-[#d2d2d2]">
            {['x', 'y', 'z', 'Value'].map((h) => (
              <th key={h} className="w-[72px] p-0 pl-0.5 text-left font-normal leading-[13px] border-r border-[#e0e0e0]">{h}</th>
            ))}
            <th />
          </tr>
        </thead>
        <tbody>
          {rows.map((r, i) => (
            <tr key={i} className="h-[15px] even:bg-[#f4f4f4]">
              {r.map((v, j) => (
                <td key={j} className="p-0 pl-0.5 leading-[14px] border-r border-[#c4c4c4]">{v}</td>
              ))}
              <td />
            </tr>
          ))}
        </tbody>
      </table>
    </div>
  </div>
);

export default function App() {
  return (
    <div className="min-h-screen flex flex-col bg-[#e8e8e8] border-l border-[#333] text-[11px] leading-[14px] text-black font-['Inter',sans-serif]">
      <SharedDefs />

      {/* Title bar */}
      <div className="h-[22px] shrink-0 relative flex items-center justify-center bg-linear-to-b from-[#ededed] to-[#d2d2d2] border-b border-[#b1b1b1]">
        <div className="absolute left-2 flex gap-2">
          <button aria-label="Close window" className="w-3 h-3 rounded-full bg-[#fc3d49] border border-[#e0333e] flex items-center justify-center">
            <span className="w-1 h-1 rounded-full bg-[#4d0000]" />
          </button>
          <button aria-label="Minimize window" className="w-3 h-3 rounded-full bg-[#fdb900] border border-[#e2a400]" />
          <button aria-label="Zoom window" className="w-3 h-3 rounded-full bg-[#00d63b] border border-[#00bb33]" />
        </div>
        <span className="text-[13px] text-[#4a4a4a]">periodic-cylinder-length-sweep.mph</span>
      </div>

      {/* Toolbar */}
      <div className="h-[26px] shrink-0 flex items-center pl-[5px]">
        <Handle />
        <div className="flex pl-[3px] pr-0.5">
          <IconButton label="New"><FileIcon /></IconButton>
          <IconButton label="Open"><OpenIcon /></IconButton>
          <IconButton label="Save"><SaveIcon /></IconButton>
          <IconButton label="Print"><PrintIcon /></IconButton>
        </div>
        <Sep />
        <div className="flex pl-1 pr-0.5">
          <IconButton label="Undo"><UndoIcon /></IconButton>
          <IconButton label="Redo"><RedoIcon /></IconButton>
        </div>
        <Sep />
        <div className="flex pl-[3px] pr-1">
          <IconButton label="Help"><HelpIcon /></IconButton>
          <IconButton label="Documentation"><BookIcon /></IconButton>
        </div>
        <Handle />
        <div className="flex items-center pl-1 pr-1.5">
          <IconButton label="Clear"><BrushIcon /></IconButton>
          <span className="-ml-0.5"><Caret color="#777" /></span>
        </div>
        <Sep />
        <div className="flex pl-0.5 pr-[3px]">
          <IconButton label="Evaluate" pressed><NumIcon /></IconButton>
          <IconButton label="First point"><LineLow /></IconButton>
          <IconButton label="Second point"><LineHigh /></IconButton>
          <IconButton label="Cut plane normal"><PlaneV /></IconButton>
          <IconButton label="Cut plane"><PlaneD /></IconButton>
          <IconButton label="Cut line end"><BoxA /></IconButton>
          <IconButton label="Cut line start"><BoxB /></IconButton>
          <IconButton label="Parallel planes"><PlaneV twice /></IconButton>
          <IconButton label="Slanted planes"><PlaneD twice /></IconButton>
        </div>
        <Sep />
        <div className="flex pl-0.5">
          <IconButton label="Slice">
            <WireCube><path d="M4 3L7 6V14L4 11ZM9 3L12 6V14L9 11Z" fill="#18b8e0" stroke="#1840e0" /></WireCube>
          </IconButton>
          <IconButton label="Isosurface">
            <WireCube><path d="M5 3C11 3 13 9 7 12M8 5C12 7 11 11 9 13" stroke="#2058f0" strokeWidth="1.500" /><path d="M5 6C8 6 8 9 5 10" stroke="#20d8e0" strokeWidth="1.500" /></WireCube>
          </IconButton>
          <IconButton label="Surface"><Cube /></IconButton>
          <IconButton label="Top surface">
            <WireCube><path d="M1 1.500H11L15 5.500H5Z" fill="#1848f0" /></WireCube>
          </IconButton>
          <IconButton label="Line">
            <WireCube><path d="M5 5.500H15" stroke="#20c0e8" strokeWidth="3" /></WireCube>
          </IconButton>
          <IconButton label="Arrow">
            <WireCube><path d="M3 8.500H13M5 6.500L3 8.500L5 10.500M11 6.500L13 8.500L11 10.500" stroke="#2058f0" /></WireCube>
          </IconButton>
          <IconButton label="Streamline"><Waves /></IconButton>
          <IconButton label="Player"><PlayBox /></IconButton>
        </div>
      </div>

      {/* Panels */}
      <div className="flex-1 flex gap-1 pl-1 pr-[3px]">
        <ModelBuilder />
        <SettingsPanel />
        <div className="flex-1 min-w-0 flex flex-col gap-1">
          <Graphics />
          <ResultsPanel />
        </div>
      </div>

      {/* Status bar */}
      <div className="h-[29px] shrink-0 flex justify-end items-center">
        <div className="w-[149px] h-[27px] flex items-center pl-[7px] border-x border-[#9c9c9c]">826 MB | 5141 MB</div>
        <div className="w-[207px]" />
      </div>
    </div>
  );
}
